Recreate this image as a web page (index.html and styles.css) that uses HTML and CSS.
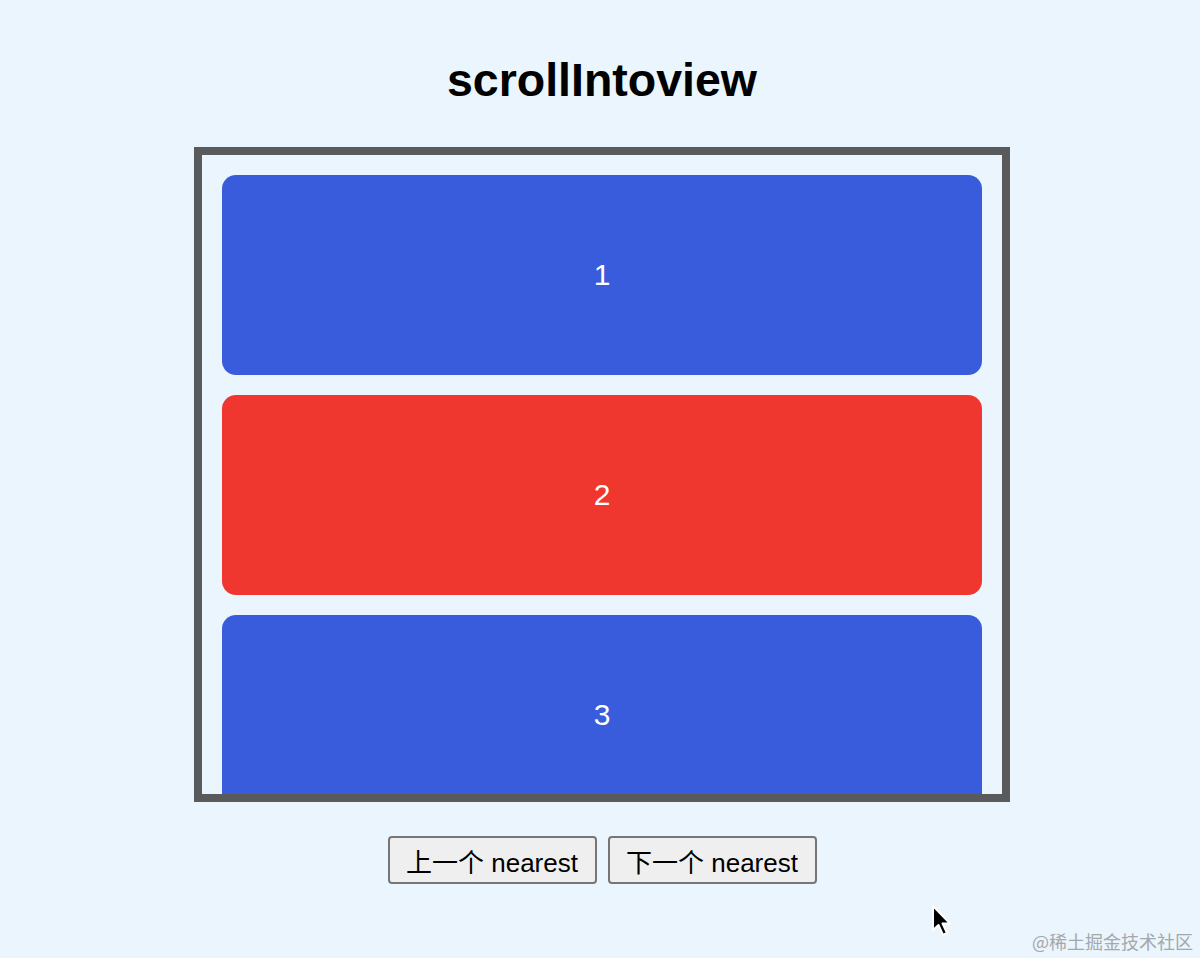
FILE: index.html
```html
<!DOCTYPE html>
<html lang="zh-CN">
<head>
    <meta charset="UTF-8">
    <meta name="viewport" content="width=device-width, initial-scale=1.0">
    <title>scrollIntoview</title>
    <link rel="stylesheet" href="styles.css">
</head>
<body>
    <div class="page">
        <h1>scrollIntoview</h1>

        <div class="scroll-box" id="scrollBox">
            <div class="item blue">1</div>
            <div class="item red">2</div>
            <div class="item blue">3</div>
        </div>

        <div class="actions">
            <button type="button" class="nav-btn">上一个 nearest</button>
            <button type="button" class="nav-btn">下一个 nearest</button>
        </div>
    </div>

    <svg class="cursor" width="22" height="34" viewBox="0 0 22 34">
        <path d="M2 2 L2 26 L7.5 21 L12 31 L16 29 L11.5 19.5 L19 19.5 Z" fill="#000" stroke="#fff" stroke-width="2" stroke-linejoin="round"/>
    </svg>

    <div class="watermark">@稀土掘金技术社区</div>
</body>
</html>
```

FILE: styles.css
```css
html, body {
    margin: 0;
    padding: 0;
}

body {
    background: #ebf5fd;
    font-family: "Liberation Sans", "Noto Sans CJK SC", Arial, sans-serif;
    color: #000;
    min-height: 958px;
    position: relative;
}

.page {
    display: flex;
    flex-direction: column;
    align-items: center;
    padding: 50px 0 0 4px;
}

h1 {
    margin: 0 0 37px;
    font-size: 46.5px;
    font-weight: 700;
    line-height: 60px;
}

.scroll-box {
    box-sizing: border-box;
    width: 816px;
    height: 655px;
    border: 8px solid #585a5c;
    padding: 20px;
    overflow: hidden;
    display: flex;
    flex-direction: column;
    gap: 20px;
}

.item {
    flex: 0 0 200px;
    border-radius: 14px;
    display: flex;
    align-items: center;
    justify-content: center;
    color: #fff;
    font-size: 30px;
}

.item.blue {
    background: #385cdb;
}

.item.red {
    background: #ef362f;
}

.actions {
    display: flex;
    gap: 11px;
    margin-top: 34px;
}

.nav-btn {
    height: 48px;
    width: 209px;
    padding: 0;
    font-family: "Liberation Sans", "Noto Sans CJK SC", Arial, sans-serif;
    font-size: 26px;
    color: #000;
    background: #efefef;
    border: 2px solid #767676;
    border-radius: 4px;
}

.cursor {
    position: absolute;
    left: 931px;
    top: 904px;
}

.watermark {
    position: absolute;
    right: 7px;
    bottom: 4px;
    font-family: "Noto Sans CJK SC", sans-serif;
    font-size: 18px;
    color: #a3a8ad;
}
```
